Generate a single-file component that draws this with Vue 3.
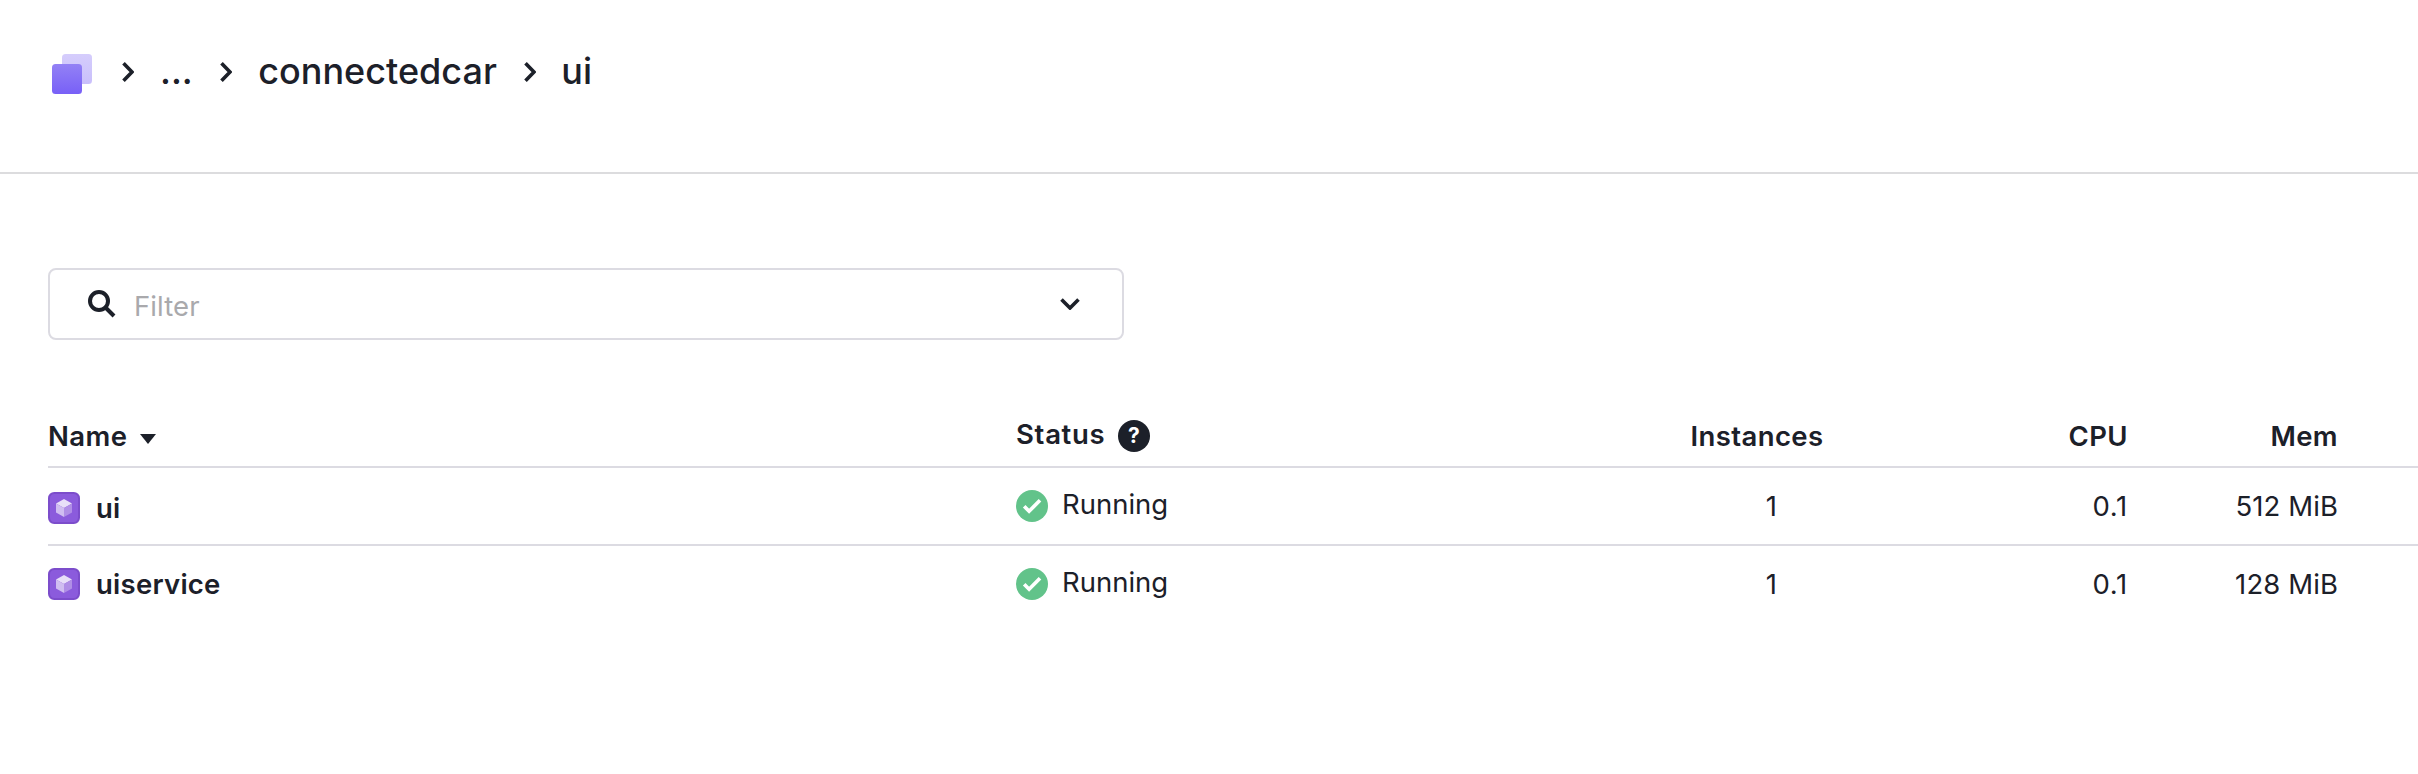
<script setup>
const columns = ['Instances', 'CPU', 'Mem']
const rows = [
  { name: 'ui', status: 'Running', instances: '1', cpu: '0.1', mem: '512 MiB' },
  { name: 'uiservice', status: 'Running', instances: '1', cpu: '0.1', mem: '128 MiB' },
]
</script>

<template>
  <div class="page">
    <header class="topbar">
      <svg class="logo" viewBox="0 0 40 40">
        <defs>
          <linearGradient id="logoBack" x1="0" y1="0" x2="0" y2="1">
            <stop offset="0" stop-color="#d5cdfc" />
            <stop offset="1" stop-color="#c9bffb" />
          </linearGradient>
          <linearGradient id="logoFront" x1="0" y1="0" x2="0" y2="1">
            <stop offset="0" stop-color="#9381f5" />
            <stop offset="1" stop-color="#7860f7" />
          </linearGradient>
        </defs>
        <rect x="10" width="30" height="30" rx="3.500" fill="url(#logoBack)" />
        <rect y="10" width="30" height="30" rx="3.500" fill="url(#logoFront)" />
      </svg>
      <svg class="sep" viewBox="0 0 12 20"><path d="M1.500 1.300 10 10 1.500 18.700" /></svg>
      <span class="crumb dots">...</span>
      <svg class="sep" viewBox="0 0 12 20"><path d="M1.500 1.300 10 10 1.500 18.700" /></svg>
      <span class="crumb parent">connectedcar</span>
      <svg class="sep" viewBox="0 0 12 20"><path d="M1.500 1.300 10 10 1.500 18.700" /></svg>
      <span class="crumb leaf">ui</span>
    </header>

    <main class="content">
      <div class="filter">
        <svg class="search" viewBox="0 0 28 28">
          <circle cx="11" cy="11" r="9" /><path d="M17.500 17.500 26 26" />
        </svg>
        <span class="placeholder">Filter</span>
        <svg class="caret" viewBox="0 0 20 12"><path d="M1.500 1.500 10 10l8.500-8.500" /></svg>
      </div>

      <div class="table">
        <div class="row head">
          <div class="cell name">
            <span>Name</span>
            <svg class="sort" viewBox="0 0 16 10"><path d="M0 0h16L8 10z" /></svg>
          </div>
          <div class="cell status">
            <span>Status</span>
            <span class="help">?</span>
          </div>
          <div v-for="c in columns" :key="c" class="cell num">{{ c }}</div>
        </div>

        <div v-for="r in rows" :key="r.name" class="row body">
          <div class="cell name">
            <svg class="icon" viewBox="0 0 32 32">
              <rect x="1" y="1" width="30" height="30" rx="5.200" fill="#8b5bdc" stroke="#7c4dcb" stroke-width="2" />
              <path d="M16 7l8 4.500-8 4.500-8-4.500z" fill="#e8dff8" />
              <path d="M8 11.500l8 4.500v9l-8-4.500z" fill="#d0bdf1" />
              <path d="M24 11.500l-8 4.500v9l8-4.500z" fill="#b08ee6" />
            </svg>
            <span>{{ r.name }}</span>
          </div>
          <div class="cell status">
            <svg class="icon" viewBox="0 0 32 32">
              <circle cx="16" cy="16" r="16" fill="#62c38a" />
              <path d="M8.200 16.300l4.900 4.900L24 10.300" fill="none" stroke="#fff" stroke-width="3.700" />
            </svg>
            <span>{{ r.status }}</span>
          </div>
          <div class="cell num instances">{{ r.instances }}</div>
          <div class="cell num cpu">{{ r.cpu }}</div>
          <div class="cell num">{{ r.mem }}</div>
        </div>
      </div>
    </main>
  </div>
</template>

<style>
body {
  margin: 0;
  background: #fff;
}
</style>

<style scoped>
.page {
  width: 100%;
  height: 774px;
  overflow: hidden;
  background: #fff;
  color: #1c2029;
  font: 400 27.500px/32px Inter, 'Liberation Sans', sans-serif;
  letter-spacing: 0.100px;
}
.topbar {
  box-sizing: border-box;
  height: 174px;
  padding: 50px 0 0 52px;
  border-bottom: 2px solid #dcdcde;
  display: flex;
  align-items: flex-start;
}
.logo {
  width: 40px;
  height: 40px;
  margin: 4px 30px 0 0;
}
.sep {
  width: 12px;
  height: 20px;
  margin-top: 12px;
  fill: none;
  stroke: #1c2029;
  stroke-width: 3.600;
}
.crumb {
  font-size: 36px;
  font-weight: 500;
  line-height: 42px;
  letter-spacing: 0;
  margin-left: 26.500px;
}
.crumb.dots {
  margin-left: 26px;
  margin-right: 27px;
}
.crumb.parent {
  margin-right: 27px;
}
.crumb.leaf {
  margin-left: 25.500px;
}
.content {
  padding: 94px 0 0 48px;
}
.filter {
  box-sizing: border-box;
  width: 1076px;
  height: 72px;
  border: 2px solid #dcdbe2;
  border-radius: 8px;
  padding: 0 42px 0 38px;
  display: flex;
  align-items: center;
}
.search {
  width: 28px;
  height: 28px;
  fill: none;
  stroke: #1c2029;
  stroke-width: 4;
}
.placeholder {
  flex: 1;
  margin: 4px 0 0 18px;
  color: #a9a9ac;
}
.caret {
  width: 20px;
  height: 12px;
  fill: none;
  stroke: #1c2029;
  stroke-width: 3.600;
}
.table {
  margin-top: 70px;
}
.row {
  box-sizing: border-box;
  display: grid;
  grid-template-columns: 968px 400px 407.500px 304.500px 210px;
  align-items: start;
}
.head {
  height: 58px;
  border-bottom: 2px solid #dcdbe2;
  font-weight: 600;
  letter-spacing: 0.400px;
}
.body {
  height: 78px;
}
.body + .body {
  height: 76px;
}
.body:not(:last-child) {
  border-bottom: 2px solid #dcdbe2;
}
.cell {
  display: flex;
}
.num {
  justify-content: flex-end;
}
.head .cell {
  padding-top: 10px;
}
.head .name span {
  width: 79px;
}
.sort {
  width: 16px;
  height: 10px;
  margin: 14px 0 0 13px;
  fill: #1c2029;
}
.head .status {
  padding-top: 8px;
}
.head .status span:first-child {
  width: 88px;
  letter-spacing: 0.700px;
}
.head .status .help {
  width: 32px;
  height: 32px;
  margin: 2px 0 0 14px;
  border-radius: 50%;
  background: #1c2029;
  color: #fff;
  font-size: 21px;
  font-weight: 700;
  text-align: center;
  letter-spacing: 0;
}
.body .name {
  padding-top: 24px;
  font-weight: 600;
  gap: 16px;
  letter-spacing: 0.250px;
}
.body + .body .name {
  padding-top: 22px;
}
.icon {
  width: 32px;
  height: 32px;
}
.body .status {
  padding-top: 22px;
  gap: 14px;
  letter-spacing: 0;
}
.body .status span {
  margin-top: -2px;
}
.body .num {
  padding-top: 22px;
}
.body .instances {
  padding-right: 46.500px;
}
.body .cpu {
  letter-spacing: 0.700px;
}
</style>
